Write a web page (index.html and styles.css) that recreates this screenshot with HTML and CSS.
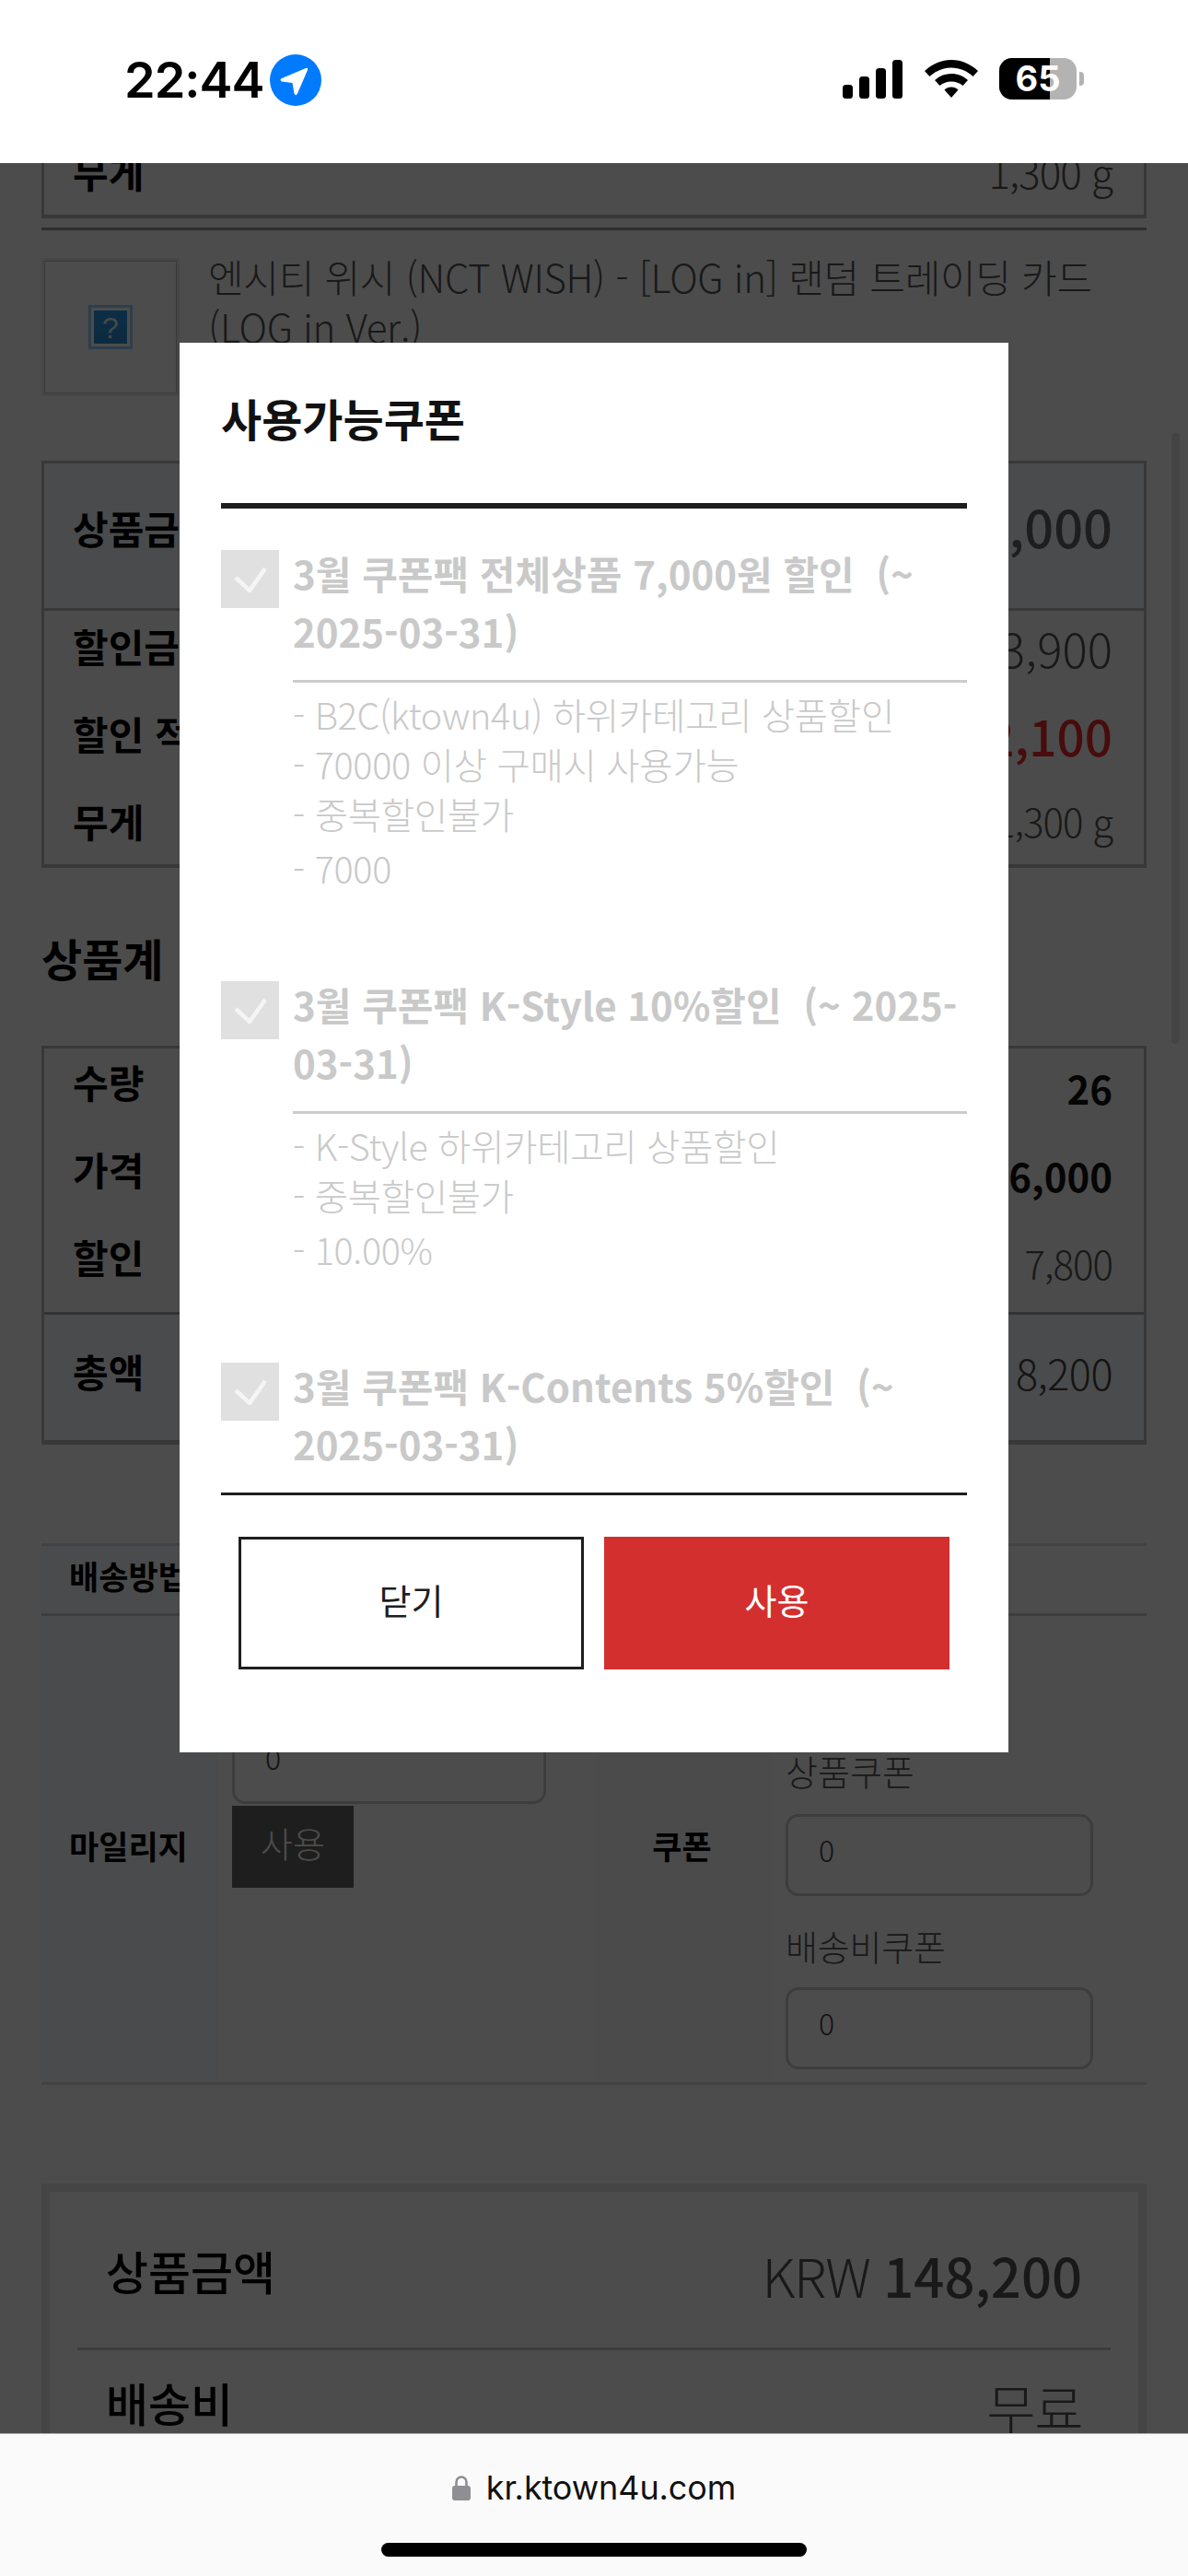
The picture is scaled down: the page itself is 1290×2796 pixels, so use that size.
FILE: index.html
```html
<!DOCTYPE html>
<html lang="ko">
<head>
<meta charset="UTF-8" />
<meta name="viewport" content="width=device-width, initial-scale=1" />
<title>사용가능쿠폰</title>
<link rel="stylesheet" href="styles.css">
</head>
<body>

<div class="status-bar">
  <div class="status-left">
    <span class="clock">22:44</span>
    <svg class="location" width="56" height="56" viewBox="0 0 56 56"><circle cx="28" cy="28" r="28" fill="#007aff"/><path d="M13 26 L39 15 Q42 14 41 17 L30 42.500 Q28 46 26.500 42.500 L24.500 31 L13 29.500 Q10 27.500 13 26 Z" fill="#fff"/></svg>
  </div>
  <div class="status-right">
    <svg width="66" height="42" viewBox="0 0 66 42"><rect x="0" y="27" width="11" height="15" rx="3.500"/><rect x="18" y="18" width="11" height="24" rx="3.500"/><rect x="36" y="9" width="11" height="33" rx="3.500"/><rect x="54" y="0" width="11" height="42" rx="3.500"/></svg>
    <svg class="wifi" width="60" height="42" viewBox="0 0 60 42"><path d="M30 0 C41 0 51 4.500 59 12 L53.500 18 C47 12 39 8.500 30 8.500 C21 8.500 13 12 6.500 18 L1 12 C9 4.500 19 0 30 0 Z"/><path d="M30 15 C37 15 43 17.500 48 22 L42.500 28 C39 25 35 23.500 30 23.500 C25 23.500 21 25 17.500 28 L12 22 C17 17.500 23 15 30 15 Z"/><path d="M30 29.500 C33 29.500 35.500 30.500 37.500 32.500 L30 41 L22.500 32.500 C24.500 30.500 27 29.500 30 29.500 Z"/></svg>
    <div class="battery">
      <div class="battery-body">
        <span class="battery-fill"></span>
        <span class="battery-num">65</span>
      </div>
      <span class="battery-nub"></span>
    </div>
  </div>
</div>

<div class="viewport">
  <div class="page">

    <div class="spec-stub">
      <span class="strong">무게</span>
      <span class="light">1,300 g</span>
    </div>
    <div class="item-rule"></div>

    <div class="product">
      <div class="thumb">
        <svg width="48" height="48" viewBox="0 0 48 48">
          <defs><linearGradient id="thumb-fill" x1="0" y1="0" x2="0" y2="1"><stop offset="0" stop-color="#259df0"/><stop offset="1" stop-color="#2f8ccf"/></linearGradient></defs>
          <rect width="48" height="48" fill="#96cfff"/>
          <rect x="3" y="3" width="42" height="42" fill="#fff"/>
          <rect x="6" y="6" width="36" height="36" fill="url(#thumb-fill)"/>
          <text x="24" y="36" text-anchor="middle" class="thumb-mark">?</text>
        </svg>
      </div>
      <div class="product-name">엔시티 위시 (NCT WISH) - [LOG in] 랜덤 트레이딩 카드 (LOG in Ver.)</div>
    </div>

    <div class="price-table">
      <div class="price-head">
        <span class="strong">상품금액</span>
        <span class="amount-big">156,000</span>
      </div>
      <div class="price-body">
        <div class="price-row row-first"><span class="strong">할인금액</span><span class="amount-mid">3,900</span></div>
        <div class="price-row"><span class="strong">할인 적용</span><span class="amount-red">152,100</span></div>
        <div class="price-row"><span class="strong">무게</span><span class="light">1,300 g</span></div>
      </div>
    </div>

    <h2 class="section-title">상품계</h2>

    <div class="total-table">
      <div class="total-body">
        <div class="price-row row-up"><span class="strong">수량</span><span class="num-strong">26</span></div>
        <div class="price-row"><span class="strong">가격</span><span class="num-strong">6,000</span></div>
        <div class="price-row"><span class="strong">할인</span><span class="light low">7,800</span></div>
      </div>
      <div class="total-foot">
        <span class="strong">총액</span>
        <span class="light-big">8,200</span>
      </div>
    </div>

    <div class="ship-row">
      <div class="form-label">배송방법</div>
    </div>
    <div class="benefit-row">
      <div class="form-label">마일리지</div>
      <div class="benefit-col mileage-col">
        <div class="field field-wide">0</div>
        <div class="use-btn">사용</div>
      </div>
      <div class="form-label form-label-center">쿠폰</div>
      <div class="benefit-col coupon-col">
        <div class="field-label">상품쿠폰</div>
        <div class="field">0</div>
        <div class="field-label field-label-next">배송비쿠폰</div>
        <div class="field">0</div>
      </div>
    </div>

    <div class="summary">
      <div class="summary-row summary-first">
        <span class="summary-label">상품금액</span>
        <span class="summary-value">KRW <b>148,200</b></span>
      </div>
      <div class="summary-row">
        <span class="summary-label">배송비</span>
        <span class="summary-value">무료</span>
      </div>
    </div>
  </div>

  <div class="scroll-thumb"></div>
  <div class="dim"></div>

  <div class="modal">
    <h3 class="modal-title">사용가능쿠폰</h3>
    <div class="coupon-list">

      <div class="coupon">
        <span class="check"><svg width="34" height="28" viewBox="0 0 34 28"><path d="M1 12 L16 26 L33 2" fill="none" stroke="#f5f5f5" stroke-width="4.500"/></svg></span>
        <div class="coupon-main">
          <div class="coupon-name">3월 쿠폰팩 전체상품 7,000원 할인 &nbsp;(~ 2025-03-31)</div>
          <div class="coupon-desc">
            <div>- B2C(ktown4u) 하위카테고리 상품할인</div>
            <div>- 70000 이상 구매시 사용가능</div>
            <div>- 중복할인불가</div>
            <div class="coupon-rate">- 7000</div>
          </div>
        </div>
      </div>

      <div class="coupon">
        <span class="check"><svg width="34" height="28" viewBox="0 0 34 28"><path d="M1 12 L16 26 L33 2" fill="none" stroke="#f5f5f5" stroke-width="4.500"/></svg></span>
        <div class="coupon-main">
          <div class="coupon-name">3월 쿠폰팩 K-Style 10%할인 &nbsp;(~ 2025-03-31)</div>
          <div class="coupon-desc">
            <div>- K-Style 하위카테고리 상품할인</div>
            <div>- 중복할인불가</div>
            <div class="coupon-rate">- 10.00%</div>
          </div>
        </div>
      </div>

      <div class="coupon">
        <span class="check"><svg width="34" height="28" viewBox="0 0 34 28"><path d="M1 12 L16 26 L33 2" fill="none" stroke="#f5f5f5" stroke-width="4.500"/></svg></span>
        <div class="coupon-main">
          <div class="coupon-name">3월 쿠폰팩 K-Contents 5%할인 &nbsp;(~ 2025-03-31)</div>
        </div>
      </div>

    </div>
    <div class="modal-actions">
      <button class="btn btn-close">닫기</button>
      <button class="btn btn-use">사용</button>
    </div>
  </div>
</div>

<div class="url-bar">
  <div class="url">
    <svg width="20" height="27" viewBox="0 0 20 27"><path d="M4.500 12 V7 a5.500 5.500 0 0 1 11 0 V12" fill="none" stroke="#8e8e93" stroke-width="2.600"/><rect x="0" y="11" width="20" height="16" rx="3" fill="#8e8e93"/></svg>
    <span>kr.ktown4u.com</span>
  </div>
  <div class="home-bar"></div>
</div>

</body>
</html>
```

FILE: styles.css
```css
* {
  box-sizing: border-box;
}
body {
  margin: 0;
  width: 1290px;
  height: 2796px;
  display: flex;
  flex-direction: column;
  overflow: hidden;
  background: #fff;
  color: #000;
  font-family: "Noto Sans CJK KR", "Noto Sans", sans-serif;
}

/* status bar */
.status-bar {
  height: 177px;
  flex: none;
  background: #fff;
  display: flex;
  justify-content: space-between;
  padding: 59px 113px 0 135px;
  font-family: Inter, sans-serif;
}
.status-left {
  display: flex;
  align-items: flex-start;
  gap: 7px;
}
.clock {
  font-size: 54px;
  font-weight: 600;
  line-height: 56px;
  letter-spacing: -1px;
}
.status-right {
  display: flex;
  align-items: flex-start;
  padding-top: 6px;
  gap: 22px;
}
.battery {
  display: flex;
  align-items: center;
  margin-top: -2px;
  gap: 3px;
  height: 45px;
}
.battery-body {
  width: 84px;
  height: 45px;
  border-radius: 14px;
  background: #b3b3b3;
  position: relative;
  overflow: hidden;
}
.battery-fill {
  position: absolute;
  left: 0;
  top: 0;
  bottom: 0;
  width: 55px;
  background: #000;
}
.battery-num {
  position: absolute;
  left: 17px;
  top: 0;
  width: 50px;
  text-align: center;
  color: #fff;
  font-size: 38px;
  font-weight: 700;
  line-height: 45px;
}
.battery-nub {
  width: 5px;
  height: 15px;
  border-radius: 0 4px 4px 0;
  background: #b3b3b3;
}

/* page behind the dialog */
.viewport {
  flex: 1;
  position: relative;
  overflow: hidden;
  background: #fff;
}
.page {
  padding: 0 45px;
  font-size: 42px;
}
.strong {
  font-weight: 700;
  color: #000;
}
.light {
  font-weight: 300;
  color: #555;
  letter-spacing: -1px;
}
.spec-stub {
  height: 60px;
  border: 3px solid #bbb;
  border-top: 0;
  border-bottom-width: 4px;
  padding: 0 34px 0 31px;
  display: flex;
  justify-content: space-between;
  align-items: flex-start;
  line-height: 18px;
}
.spec-stub .light {
  font-size: 44px;
}
.item-rule {
  margin-top: 10px;
  height: 3px;
  background: #999;
}
.product {
  margin-top: 30px;
  display: flex;
  gap: 31px;
}
.thumb {
  width: 150px;
  height: 150px;
  flex: none;
  border: 3px solid #ebebeb;
  outline: 1px solid #c4c4c4;
  outline-offset: -4px;
  display: flex;
  align-items: center;
  justify-content: center;
}
.thumb-mark {
  font-family: "Liberation Sans", sans-serif;
  font-size: 32px;
  fill: #f0f0f0;
}
.product-name {
  font-weight: 300;
  color: #555;
  line-height: 54px;
  font-size: 42px;
  letter-spacing: -0.3px;
  margin-top: -7px;
}

.price-table {
  margin-top: 70px;
  border: 3px solid #bbb;
  border-bottom-width: 4px;
}
.price-head {
  height: 160px;
  background: #f9fbff;
  border-bottom: 3px solid #bbb;
  display: flex;
  justify-content: space-between;
  align-items: center;
  padding: 0 34px 19px 31px;
}
.amount-big {
  font-size: 56px;
  font-weight: 500;
  color: #666;
  padding-bottom: 4px;
}
.amount-mid {
  font-size: 51px;
  font-weight: 300;
  color: #555;
  margin-top: 4px;
}
.amount-red {
  font-size: 53px;
  font-weight: 500;
  color: #f02a2a;
  margin-top: 4px;
}
.price-body {
  display: flow-root;
  padding: 0 34px 0 31px;
  height: 275px;
  background: #fcfcfc;
}
.price-row {
  display: flex;
  justify-content: space-between;
  align-items: center;
  height: 95px;
}
.row-first {
  margin-top: -10px;
}
.row-up {
  margin-top: -12px;
}

.section-title {
  margin: 63px 0 0;
  font-size: 48px;
  font-weight: 700;
  line-height: 68px;
}

.total-table {
  margin-top: 62px;
  border: 3px solid #bbb;
  border-bottom-width: 5px;
}
.total-body {
  display: flow-root;
  height: 289px;
  border-bottom: 3px solid #aaa;
  padding: 0 34px 0 31px;
  background: #fcfcfc;
}
.num-strong {
  font-weight: 700;
  color: #111;
  margin-top: 14px;
}
.low {
  margin-top: 14px;
}
.total-foot {
  height: 136px;
  background: #f9fbff;
  display: flex;
  justify-content: space-between;
  padding: 30px 34px 0 31px;
  align-items: flex-start;
}
.light-big {
  font-size: 45px;
  font-weight: 300;
  color: #444;
  letter-spacing: -0.5px;
}

.ship-row {
  margin-top: 107px;
  height: 79px;
  border-top: 3px solid #ddd;
  border-bottom: 3px solid #ccc;
  display: flex;
  align-items: center;
}
.ship-row .form-label {
  height: 100%;
  padding-bottom: 11px;
}
.form-label {
  width: 192px;
  flex: none;
  background: #f9fbff;
  display: flex;
  align-items: center;
  padding-left: 30px;
  padding-bottom: 10px;
  font-size: 35px;
  font-weight: 700;
}
.form-label-center {
  justify-content: center;
  padding-left: 0;
  background: #fafbfd;
  width: 189px;
  padding-right: 4px;
}
.benefit-row {
  display: flex;
  height: 509px;
  border-bottom: 3px solid #ddd;
}
.benefit-col {
  font-size: 32px;
  font-weight: 300;
  color: #555;
}
.mileage-col {
  width: 411px;
  flex: none;
  padding: 115px 0 0 15px;
}
.coupon-col {
  flex: 1;
  padding: 145px 0 0 16px;
}
.field {
  width: 334px;
  height: 89px;
  border: 3px solid #ccc;
  border-radius: 14px;
  padding: 5px 0 0 33px;
  line-height: 60px;
  font-size: 32px;
  color: #444;
}
.field-wide {
  width: 341px;
}
.use-btn {
  width: 132px;
  height: 89px;
  margin-top: 2px;
  background: #666;
  color: #fff;
  font-size: 38px;
  text-align: center;
  line-height: 80px;
}
.field-label {
  font-size: 38px;
  line-height: 46px;
  margin-bottom: 24px;
}
.field-label-next {
  margin-top: 31px;
  margin-bottom: 22px;
  letter-spacing: -0.2px;
}

.summary {
  margin-top: 107px;
  border: 9px solid #e8e8e8;
  border-bottom: 0;
  padding: 0 30px;
}
.summary-row {
  display: flex;
  justify-content: space-between;
  align-items: flex-start;
  padding: 0 0 0 31px;
}
.summary-first {
  height: 172px;
  padding-top: 51px;
  border-bottom: 3px solid #ccc;
}
.summary-row:last-child {
  padding-top: 22px;
}
.summary-label {
  font-size: 50px;
  font-weight: 500;
  line-height: 68px;
}
.summary-value {
  font-size: 58px;
  font-weight: 300;
  color: #555;
  margin-right: 31px;
  padding-top: 5px;
  line-height: 68px;
  letter-spacing: -1.500px;
}
.summary-value b {
  font-weight: 500;
  letter-spacing: 0;
}
.scroll-thumb {
  position: absolute;
  left: 1272px;
  top: 293px;
  width: 9px;
  height: 663px;
  border-radius: 5px;
  background: #e5e5e5;
}
.dim {
  position: absolute;
  inset: 0;
  background: rgba(0, 0, 0, 0.7);
}

/* coupon dialog */
.modal {
  position: absolute;
  left: 195px;
  top: 195px;
  width: 900px;
  background: #fff;
  padding: 0 45px 90px;
}
.modal-title {
  margin: 0;
  height: 174px;
  padding-top: 46px;
  font-size: 48px;
  font-weight: 700;
  line-height: 70px;
  color: #111;
}
.coupon-list {
  height: 1077px;
  overflow: hidden;
  border-top: 6px solid #1e1e1e;
  border-bottom: 3px solid #1e1e1e;
  padding-top: 45px;
}
.coupon {
  display: flex;
  gap: 15px;
  margin-bottom: 93px;
}
.check {
  width: 63px;
  height: 63px;
  flex: none;
  background: #e0e0e0;
  display: flex;
  align-items: center;
  justify-content: center;
}
.coupon-main {
  flex: 1;
  min-width: 0;
}
.coupon-name {
  margin-top: -7px;
  font-size: 42px;
  font-weight: 700;
  line-height: 63px;
  color: #c9c9c9;
  padding-bottom: 22px;
}
.coupon-desc {
  border-top: 3px solid #ccc;
  padding: 7px 0 3px;
  font-size: 39.500px;
  font-weight: 300;
  line-height: 54px;
  letter-spacing: -0.3px;
  color: #c9c9c9;
}
.coupon-rate {
  padding-top: 5px;
}
.modal-actions {
  display: flex;
  gap: 22px;
  padding: 45px 19px 0;
}
.btn {
  width: 375px;
  height: 144px;
  padding: 0 0 10px;
  font-family: inherit;
  font-size: 38px;
  font-weight: 400;
  cursor: pointer;
}
.btn-close {
  background: #fff;
  border: 3px solid #1e1e1e;
  color: #1e1e1e;
}
.btn-use {
  background: #d32f2f;
  border: none;
  color: #fff;
}

/* safari bottom bar */
.url-bar {
  height: 155px;
  flex: none;
  background: #fafafa;
  border-top: 1px solid #b5b5b5;
  display: flex;
  flex-direction: column;
  align-items: center;
  padding-top: 40px;
}
.url {
  display: flex;
  align-items: center;
  gap: 17px;
  font-family: Inter, sans-serif;
  font-size: 36px;
  line-height: 36px;
  letter-spacing: -0.1px;
  color: #111;
}
.home-bar {
  width: 462px;
  height: 15px;
  border-radius: 8px;
  background: #000;
  margin-top: 42px;
}
```
